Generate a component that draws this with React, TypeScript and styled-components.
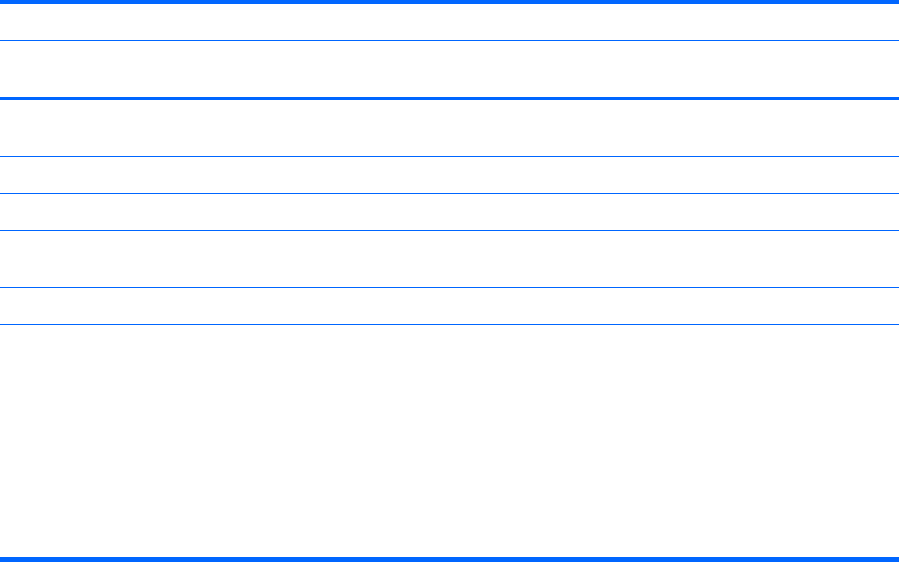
import React from 'react';
import styled, { createGlobalStyle } from 'styled-components';

const GlobalStyle = createGlobalStyle`
  html, body {
    margin: 0;
    padding: 0;
    background-color: #ffffff;
    font-family: 'Liberation Sans', Arial, sans-serif;
  }
`;

const TableFrame = styled.div`
  width: 899px;
  border-top: 4px solid #0066ff;
  border-bottom: 5px solid #0066ff;

  display: flex;
  flex-direction: column;
`;

const TableRow = styled.div<{ $height: number; $rule: number }>`
  height: ${(p) => p.$height}px;
  border-bottom: ${(p) => p.$rule}px solid #0066ff;

  display: grid;
  grid-template-columns: 1fr 2fr;
  align-items: center;

  font-size: 13px;
  color: #000000;
`;

const TableCell = styled.div`
  padding: 0 8px;
`;

const rows = [
  { height: 36, rule: 1 },
  { height: 56, rule: 3 },
  { height: 56, rule: 1 },
  { height: 36, rule: 1 },
  { height: 36, rule: 1 },
  { height: 56, rule: 1 },
  { height: 36, rule: 1 },
  { height: 232, rule: 0 },
];

const App: React.FC = () => {
  return (
    <>
      <GlobalStyle />
      <TableFrame>
        {rows.map((row, i) => (
          <TableRow key={i} $height={row.height} $rule={row.rule}>
            <TableCell />
            <TableCell />
          </TableRow>
        ))}
      </TableFrame>
    </>
  );
};

export default App;
